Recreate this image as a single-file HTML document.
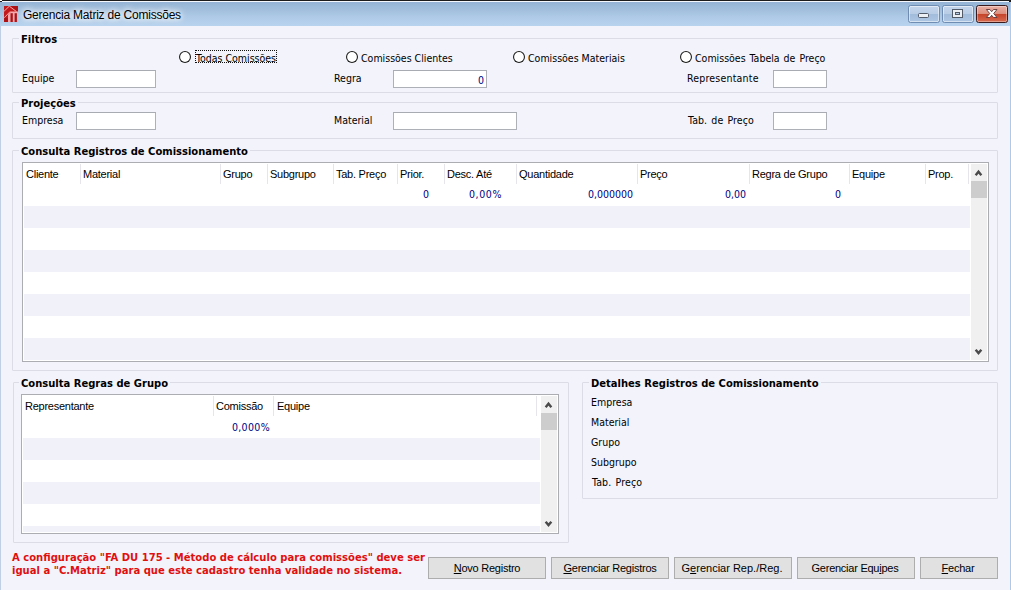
<!DOCTYPE html>
<html lang="pt-BR">
<head>
<meta charset="utf-8">
<title>Gerencia Matriz de Comissões</title>
<style>
*{box-sizing:border-box;margin:0;padding:0}
html,body{width:1011px;height:590px;overflow:hidden;background:#f2f3fb}
body{position:relative;font-family:"DejaVu Sans Condensed","Liberation Sans",sans-serif;font-size:10.5px;color:#000;line-height:13px}
.abs,.abs>*{position:absolute}
#win{position:absolute;left:0;top:0;width:1011px;height:590px;background:#f2f3fb;overflow:hidden}
/* title bar */
#tb{position:absolute;left:0;top:0;width:1011px;height:26px;background:linear-gradient(180deg,#96b5d6 0px,#96b5d6 3px,#a2bfdd 10px,#aecae7 17px,#b8d3ee 26px)}
#tb .topb{position:absolute;left:0;top:0;width:1011px;height:1px;background:#1c1c1c}
#tb .toph{position:absolute;left:2px;top:1px;width:1007px;height:1px;background:#f4f8fc}
#title{position:absolute;left:23px;top:7px;font-family:"Liberation Sans",sans-serif;font-size:12px;letter-spacing:-0.22px;text-shadow:0 0 5px #fff,0 0 7px #fff,0 0 9px rgba(255,255,255,.9);line-height:16px;color:#000;white-space:nowrap}
.lb{position:absolute;left:0;top:26px;width:1px;height:564px;background:#c0cfe3}
.rb{position:absolute;left:1010px;top:2px;width:1px;height:588px;background:#afc9e8}
.cbtn{position:absolute;top:5px;width:32px;height:18px;border:1px solid #6f8cb2;border-radius:2.5px;box-shadow:inset 0 0 0 1px rgba(255,255,255,.5);background:linear-gradient(180deg,#c3d5eb 0%,#b9cde6 47%,#a2bcdc 53%,#aec6e3 100%)}
.cbtn.close{width:32px;border-color:#3a1a1c;box-shadow:inset 0 0 0 1px rgba(255,255,255,.35);background:linear-gradient(180deg,#e9b1a5 0%,#dd8f7e 47%,#c6452b 53%,#d7694f 100%)}
/* group boxes */
.gb{position:absolute;border:1px solid #dbdce6;border-radius:1px}
.lg{position:absolute;font-weight:bold;font-size:11.1px;background:#f2f3fb;padding:0 2px;white-space:nowrap;line-height:13px}
.t{position:absolute;white-space:nowrap;line-height:13px}
.in{position:absolute;height:18px;background:#fff;border:1px solid #aeb0b8;border-top-color:#a9abb3}
.radio{position:absolute;width:12px;height:12px;border-radius:50%;background:#fff;box-shadow:inset 0 0 0 1.1px #1c1c1c}
.grid{position:absolute;background:#fff;border:1px solid #abadb3}
.grid .alt{position:absolute;height:22px;background:#f1f2f9}
.grid .sep{position:absolute;width:1px;background:#e6e6ea}
.h{position:absolute;font-family:"Liberation Sans",sans-serif;font-size:11px;letter-spacing:-0.25px;line-height:13px;white-space:nowrap;color:#000}
.v{position:absolute;white-space:nowrap;color:#00007f;line-height:13px;text-align:right}
.sb{position:absolute;width:16px;background:#f0f0f0}
.sb .th{position:absolute;left:0;width:16px;background:#cdcdcd}
.btn{position:absolute;top:557px;height:22px;border:1px solid #adadad;background:#e1e1e1;font-family:"Liberation Sans",sans-serif;font-size:11px;letter-spacing:-0.25px;line-height:20px;text-align:center;white-space:nowrap;color:#000}
.btn u{text-decoration:underline}
.red{position:absolute;left:12px;top:551px;font-size:11.15px;color:#e01010;font-weight:bold;white-space:nowrap;line-height:13px}
</style>
</head>
<body>
<div id="win">
  <div id="tb">
    <div class="topb"></div><div class="toph"></div><div style="position:absolute;left:1009px;top:0;width:2px;height:2px;background:#1c1c1c"></div><div style="position:absolute;left:0;top:1px;width:2px;height:1px;background:#1c1c1c"></div><div style="position:absolute;left:0;top:0;width:2px;height:1px;background:#fff"></div>
    <svg style="position:absolute;left:4px;top:6px" width="14" height="16" viewBox="0 0 14 16">
      <rect x="0" y="0" width="14" height="16" fill="#c21a1c"/>
      <path d="M6 0 L14 0 L14 6 Z" fill="#ae1215"/>
      <path d="M4 16 L4 8.500 L7 5.600 L14 5.600 L14 16 Z" fill="#f6a9ad"/>
      <path d="M0 5.300 L5.300 0.200 L12.400 5.500 M0.300 11.700 L6.300 5.400" stroke="#f7aaa8" stroke-width="1" fill="none"/>
      <rect x="0.300" y="12" width="3.500" height="4" fill="#a81216"/>
      <rect x="6.500" y="7.200" width="2.300" height="8.800" fill="#a81218"/>
      <rect x="10.600" y="7.200" width="2.300" height="8.800" fill="#a81218"/>
    </svg>
    <div id="title">Gerencia Matriz de Comissões</div>
    <div class="cbtn" style="left:908px"><svg width="29" height="16" style="position:absolute;left:0;top:0"><rect x="9.500" y="7.500" width="10" height="4" rx="1" fill="#eceff4" stroke="#535b68"/></svg></div>
    <div class="cbtn" style="left:942px"><svg width="29" height="16" style="position:absolute;left:0;top:0"><rect x="9.500" y="3.500" width="10" height="8" fill="#eceff4" stroke="#535b68"/><rect x="12.500" y="6.500" width="4" height="2" fill="#b9cde6" stroke="#535b68"/></svg></div>
    <div class="cbtn close" style="left:976px"><svg width="29" height="16" style="position:absolute;left:0;top:0"><path d="M9.400 3.500 L12.900 3.500 L14.700 5.700 L16.500 3.500 L20 3.500 L16.700 7.500 L20 11.500 L16.500 11.500 L14.700 9.300 L12.900 11.500 L9.400 11.500 L12.700 7.500 Z" fill="#fff" stroke="#5e3634" stroke-width="0.9"/></svg></div>
  </div>
  <div class="lb"></div><div class="rb"></div>

  <!-- Filtros -->
  <div class="gb" style="left:12px;top:38px;width:986px;height:55px"></div>
  <div class="lg" style="left:19px;top:33px">Filtros</div>
  <div class="radio" style="left:179px;top:51px"></div>
  <div style="position:absolute;left:195px;top:50px;width:82px;height:13px;border:1px dotted #111"></div>
  <div class="t" style="left:196px;top:52px">Todas Comissões</div>
  <div class="radio" style="left:346px;top:51px"></div>
  <div class="t" style="left:361px;top:52px">Comissões Clientes</div>
  <div class="radio" style="left:513px;top:51px"></div>
  <div class="t" style="left:528px;top:52px">Comissões Materiais</div>
  <div class="radio" style="left:680px;top:51px"></div>
  <div class="t" style="left:695px;top:52px;word-spacing:1px">Comissões Tabela de Preço</div>
  <div class="t" style="left:22px;top:72px">Equipe</div>
  <div class="in" style="left:76px;top:70px;width:80px"></div>
  <div class="t" style="left:334px;top:72px">Regra</div>
  <div class="in" style="left:393px;top:70px;width:94px"></div>
  <div class="v" style="left:400px;top:74px;width:84px">0</div>
  <div class="t" style="left:687px;top:72px;letter-spacing:0.2px">Representante</div>
  <div class="in" style="left:773px;top:70px;width:54px"></div>

  <!-- Projeções -->
  <div class="gb" style="left:12px;top:102px;width:986px;height:37px"></div>
  <div class="lg" style="left:19px;top:97px">Projeções</div>
  <div class="t" style="left:22px;top:114px">Empresa</div>
  <div class="in" style="left:76px;top:112px;width:80px"></div>
  <div class="t" style="left:334px;top:114px">Material</div>
  <div class="in" style="left:393px;top:112px;width:124px"></div>
  <div class="t" style="left:688px;top:114px;word-spacing:1px;letter-spacing:0.1px">Tab. de Preço</div>
  <div class="in" style="left:773px;top:112px;width:54px"></div>

  <!-- Consulta Registros -->
  <div class="gb" style="left:12px;top:150px;width:986px;height:221px"></div>
  <div class="lg" style="left:19px;top:145px">Consulta Registros de Comissionamento</div>
  <div class="grid" style="left:22px;top:162px;width:967px;height:200px">
    <div class="alt" style="left:1px;top:43px;width:946px"></div>
    <div class="alt" style="left:1px;top:87px;width:946px"></div>
    <div class="alt" style="left:1px;top:131px;width:946px"></div>
    <div class="alt" style="left:1px;top:175px;width:946px"></div>
    <div class="sep" style="left:57px;top:1px;height:20px"></div>
    <div class="sep" style="left:197px;top:1px;height:20px"></div>
    <div class="sep" style="left:244px;top:1px;height:20px"></div>
    <div class="sep" style="left:310px;top:1px;height:20px"></div>
    <div class="sep" style="left:374px;top:1px;height:20px"></div>
    <div class="sep" style="left:421px;top:1px;height:20px"></div>
    <div class="sep" style="left:493px;top:1px;height:20px"></div>
    <div class="sep" style="left:614px;top:1px;height:20px"></div>
    <div class="sep" style="left:726px;top:1px;height:20px"></div>
    <div class="sep" style="left:826px;top:1px;height:20px"></div>
    <div class="sep" style="left:902px;top:1px;height:20px"></div>
    <div class="sep" style="left:945px;top:1px;height:20px"></div>
    <div class="h" style="left:3px;top:5px">Cliente</div>
    <div class="h" style="left:60px;top:5px">Material</div>
    <div class="h" style="left:200px;top:5px">Grupo</div>
    <div class="h" style="left:247px;top:5px">Subgrupo</div>
    <div class="h" style="left:313px;top:5px">Tab. Preço</div>
    <div class="h" style="left:377px;top:5px">Prior.</div>
    <div class="h" style="left:424px;top:5px">Desc. Até</div>
    <div class="h" style="left:496px;top:5px">Quantidade</div>
    <div class="h" style="left:617px;top:5px">Preço</div>
    <div class="h" style="left:729px;top:5px">Regra de Grupo</div>
    <div class="h" style="left:829px;top:5px">Equipe</div>
    <div class="h" style="left:905px;top:5px">Prop.</div>
    <div class="v" style="left:376px;top:25px;width:30px">0</div>
    <div class="v" style="left:420px;top:25px;width:59px;letter-spacing:0.6px">0,00%</div>
    <div class="v" style="left:495px;top:25px;width:115px">0,000000</div>
    <div class="v" style="left:615px;top:25px;width:108px">0,00</div>
    <div class="v" style="left:727px;top:25px;width:91px">0</div>
    <div class="sb" style="left:948px;top:1px;height:196px">
      <div class="th" style="top:17px;height:17px"></div>
      <svg style="position:absolute;left:0;top:0" width="15" height="17"><path d="M4.650 11.150 L7.500 7.700 L10.350 11.150" stroke="#4a4a4a" stroke-width="2.400" fill="none"/></svg>
      <svg style="position:absolute;left:0;bottom:0" width="15" height="17"><path d="M4.650 6.700 L7.500 10.100 L10.350 6.700" stroke="#4a4a4a" stroke-width="2.400" fill="none"/></svg>
    </div>
  </div>

  <!-- Consulta Regras de Grupo -->
  <div class="gb" style="left:13px;top:382px;width:556px;height:161px"></div>
  <div class="lg" style="left:19px;top:377px">Consulta Regras de Grupo</div>
  <div class="grid" style="left:21px;top:394px;width:538px;height:140px">
    <div class="alt" style="left:1px;top:43px;width:517px"></div>
    <div class="alt" style="left:1px;top:87px;width:517px"></div>
    <div class="alt" style="left:1px;top:131px;width:517px;height:6px"></div>
    <div class="sep" style="left:191px;top:1px;height:20px"></div>
    <div class="sep" style="left:251px;top:1px;height:20px"></div>
    <div class="sep" style="left:514px;top:1px;height:20px"></div>
    <div class="h" style="left:3px;top:5px">Representante</div>
    <div class="h" style="left:194px;top:5px">Comissão</div>
    <div class="h" style="left:255px;top:5px">Equipe</div>
    <div class="v" style="left:193px;top:26px;width:55px;letter-spacing:0.35px">0,000%</div>
    <div class="sb" style="left:519px;top:1px;height:136px">
      <div class="th" style="top:17px;height:17px"></div>
      <svg style="position:absolute;left:0;top:0" width="15" height="17"><path d="M4.650 11.150 L7.500 7.700 L10.350 11.150" stroke="#4a4a4a" stroke-width="2.400" fill="none"/></svg>
      <svg style="position:absolute;left:0;bottom:0" width="15" height="17"><path d="M4.650 6.700 L7.500 10.100 L10.350 6.700" stroke="#4a4a4a" stroke-width="2.400" fill="none"/></svg>
    </div>
  </div>

  <!-- Detalhes -->
  <div class="gb" style="left:582px;top:382px;width:416px;height:117px"></div>
  <div class="lg" style="left:589px;top:377px">Detalhes Registros de Comissionamento</div>
  <div class="t" style="left:591px;top:396px">Empresa</div>
  <div class="t" style="left:591px;top:416px">Material</div>
  <div class="t" style="left:591px;top:436px">Grupo</div>
  <div class="t" style="left:591px;top:456px">Subgrupo</div>
  <div class="t" style="left:592px;top:476px;word-spacing:1px;letter-spacing:0.15px">Tab. Preço</div>

  <div class="red">A configuração "FA DU 175 - Método de cálculo para comissões" deve ser<br>igual a "C.Matriz" para que este cadastro tenha validade no sistema.</div>

  <div class="btn" style="left:428px;width:118px"><u>N</u>ovo Registro</div>
  <div class="btn" style="left:551px;width:118px"><u>G</u>erenciar Registros</div>
  <div class="btn" style="left:674px;width:118px;letter-spacing:0;padding-right:2px">G<u>e</u>renciar Rep./Reg.</div>
  <div class="btn" style="left:797px;width:118px;padding-right:2px">Gerenciar Equ<u>i</u>pes</div>
  <div class="btn" style="left:920px;width:78px;padding-right:2px"><u>F</u>echar</div>
</div>
</body>
</html>
